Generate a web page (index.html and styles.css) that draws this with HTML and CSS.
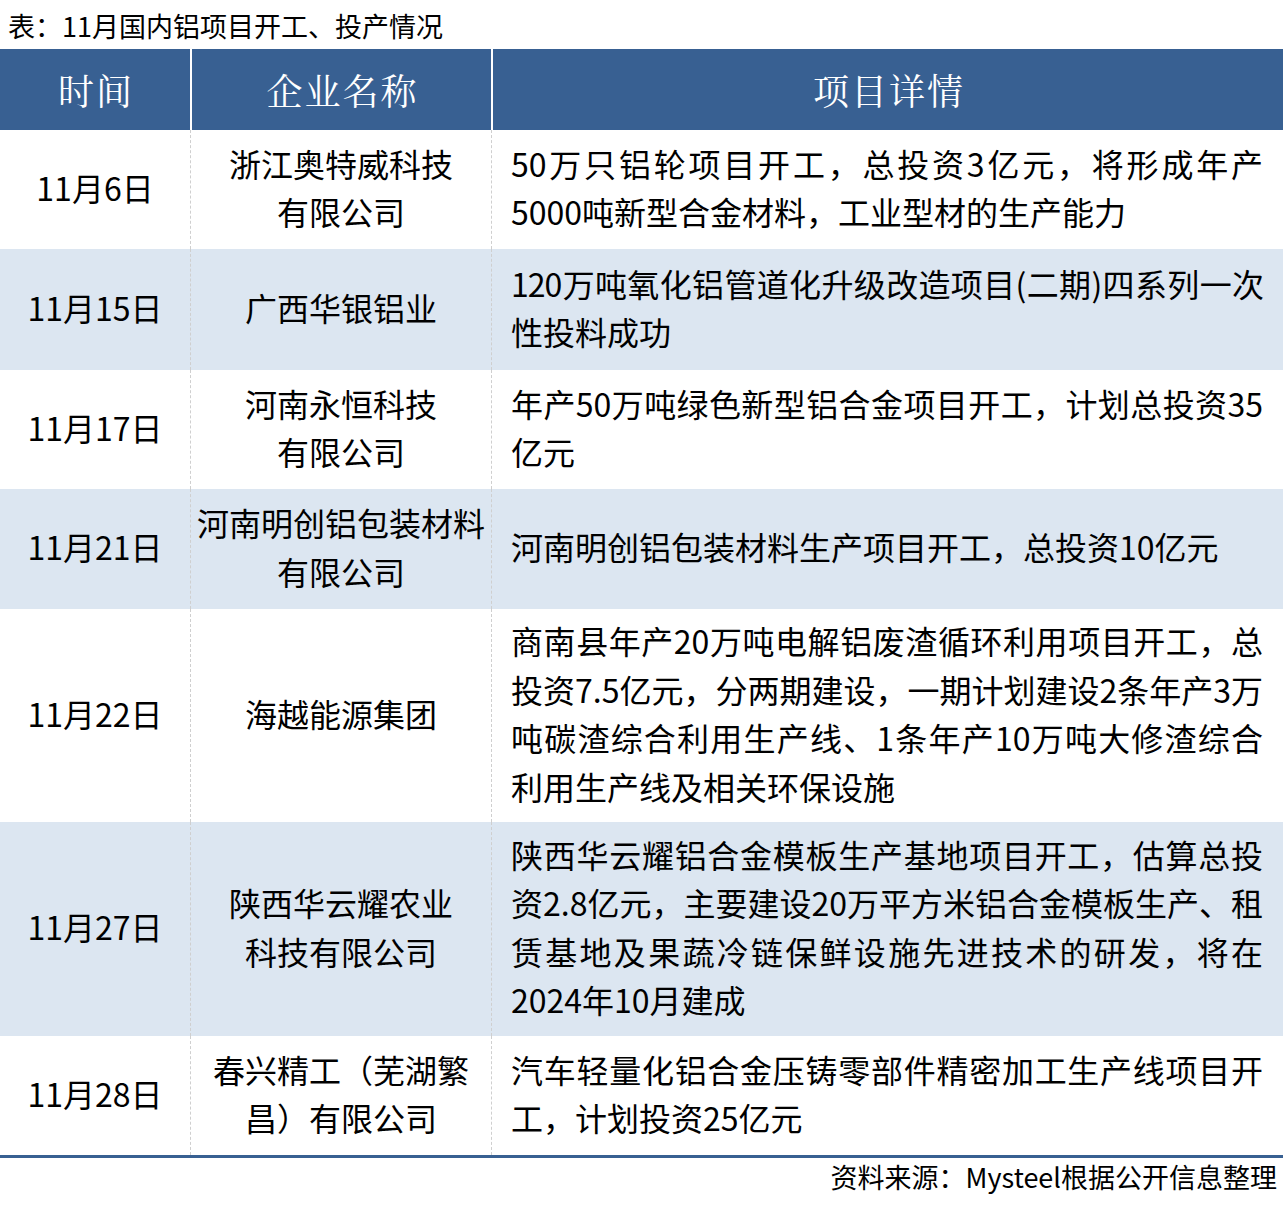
FILE: index.html
```html
<!DOCTYPE html>
<html lang="zh-CN">
<head>
<meta charset="utf-8">
<title>11月国内铝项目开工、投产情况</title>
<link rel="stylesheet" href="styles.css">
</head>
<body>
<div class="title">表：11月国内铝项目开工、投产情况</div>
<div class="grid">
  <div class="th c1">时间</div>
  <div class="th c2">企业名称</div>
  <div class="th c3">项目详情</div>

  <div class="td c1 r1">11月6日</div>
  <div class="td c2 r1">浙江奥特威科技<br>有限公司</div>
  <div class="td c3 r1"><span class="ln j">50万只铝轮项目开工，总投资3亿元，将形成年产</span><span class="ln">5000吨新型合金材料，工业型材的生产能力</span></div>

  <div class="td c1 alt">11月15日</div>
  <div class="td c2 alt">广西华银铝业</div>
  <div class="td c3 alt"><span class="ln j tight">120万吨氧化铝管道化升级改造项目(二期)四系列一次</span><span class="ln">性投料成功</span></div>

  <div class="td c1">11月17日</div>
  <div class="td c2">河南永恒科技<br>有限公司</div>
  <div class="td c3"><span class="ln j">年产50万吨绿色新型铝合金项目开工，计划总投资35</span><span class="ln">亿元</span></div>

  <div class="td c1 alt">11月21日</div>
  <div class="td c2 alt">河南明创铝包装材料<br>有限公司</div>
  <div class="td c3 alt"><span class="ln">河南明创铝包装材料生产项目开工，总投资10亿元</span></div>

  <div class="td c1">11月22日</div>
  <div class="td c2">海越能源集团</div>
  <div class="td c3"><span class="ln j">商南县年产20万吨电解铝废渣循环利用项目开工，总</span><span class="ln j">投资7.5亿元，分两期建设，一期计划建设2条年产3万</span><span class="ln j">吨碳渣综合利用生产线、1条年产10万吨大修渣综合</span><span class="ln">利用生产线及相关环保设施</span></div>

  <div class="td c1 alt">11月27日</div>
  <div class="td c2 alt">陕西华云耀农业<br>科技有限公司</div>
  <div class="td c3 alt"><span class="ln j">陕西华云耀铝合金模板生产基地项目开工，估算总投</span><span class="ln j">资2.8亿元，主要建设20万平方米铝合金模板生产、租</span><span class="ln j">赁基地及果蔬冷链保鲜设施先进技术的研发，将在</span><span class="ln">2024年10月建成</span></div>

  <div class="td c1">11月28日</div>
  <div class="td c2">春兴精工（芜湖繁<br>昌）有限公司</div>
  <div class="td c3"><span class="ln j">汽车轻量化铝合金压铸零部件精密加工生产线项目开</span><span class="ln">工，计划投资25亿元</span></div>
</div>
<div class="source">资料来源：Mysteel根据公开信息整理</div>
</body>
</html>
```

FILE: styles.css
```css
html, body {
  margin: 0;
  padding: 0;
  background: #ffffff;
}
body {
  font-family: "Noto Sans CJK SC", "Noto Sans", sans-serif;
  color: #000000;
  width: 1283px;
}
.title {
  box-sizing: border-box;
  height: 49px;
  padding: 8px 0 0 8px;
  font-size: 27px;
  line-height: 36px;
}
.grid {
  display: grid;
  grid-template-columns: 190px 301px 792px;
  grid-template-rows: 81px 119px 121px 119px 120px 213px 214px 119px;
  border-bottom: 3px solid #386092;
}
.th {
  box-sizing: border-box;
  background: #386092;
  color: #ffffff;
  font-family: "Noto Serif CJK SC", "Noto Serif CJK", "Noto Sans CJK SC", serif;
  font-size: 36px;
  letter-spacing: 2px;
  display: flex;
  align-items: center;
  justify-content: center;
  padding-left: 2px;
}
.th.c2, .th.c3 {
  border-left: 2px solid #ffffff;
}
.td {
  box-sizing: border-box;
  font-size: 32px;
  line-height: 48.5px;
  display: flex;
  align-items: center;
  justify-content: center;
  text-align: center;
  padding-bottom: 5px;
}
.td.c2, .td.c3 {
  border-left: 1px dashed #cfcfcf;
}
.td.c3 {
  flex-direction: column;
  align-items: stretch;
  justify-content: center;
  text-align: left;
  padding: 0 20px 5px 19px;
}
.td.alt {
  background: #dce6f1;
}
.ln {
  display: block;
  white-space: nowrap;
}
.ln.j {
  text-align: justify;
  text-align-last: justify;
}
.ln.tight {
  letter-spacing: -1px;
}
.source {
  margin-top: 1px;
  padding-right: 6px;
  text-align: right;
  font-size: 27px;
  line-height: 36px;
}
```
